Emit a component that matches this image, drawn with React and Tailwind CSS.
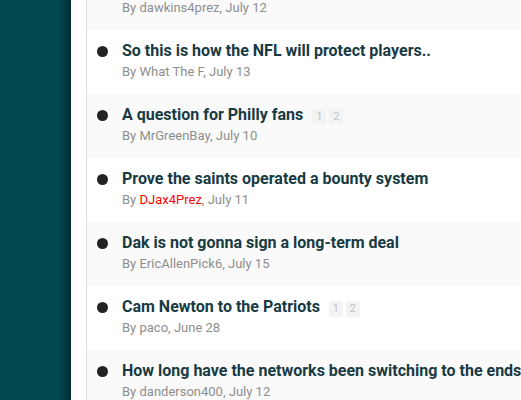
import React from "react";

const rows = [
  { title: "Some earlier topic", by: "dawkins4prez", date: "July 12", bg: "bg-[#fafafa]" },
  { title: "So this is how the NFL will protect players..", by: "What The F", date: "July 13", bg: "bg-white" },
  { title: "A question for Philly fans", by: "MrGreenBay", date: "July 10", bg: "bg-[#fafafa]", pages: true },
  { title: "Prove the saints operated a bounty system", by: "DJax4Prez", date: "July 11", bg: "bg-white", red: true },
  { title: "Dak is not gonna sign a long-term deal", by: "EricAllenPick6", date: "July 15", bg: "bg-[#fafafa]" },
  { title: "Cam Newton to the Patriots", by: "paco", date: "June 28", bg: "bg-white", pages: true },
  { title: "How long have the networks been switching to the ends of games", by: "danderson400", date: "July 12", bg: "bg-[#fafafa]" },
];

export default function App() {
  return (
    <div
      className="flex h-[400px] w-[521px] overflow-hidden bg-white"
      style={{ fontFamily: "Roboto, 'Noto Sans', sans-serif" }}
    >
      <div className="relative w-[71px] shrink-0 bg-[#00474f]">
        <div className="absolute right-0 top-0 h-full w-[12px] bg-gradient-to-r from-transparent to-[rgba(0,0,0,0.35)]" />
      </div>
      <div className="w-[15px] shrink-0 bg-white" />
      <div className="flex-1 min-w-0 border-l border-[#dcdcdc]">
        <div className="-mt-[34px] flex flex-col">
          {rows.map((r, i) => (
            <div key={i} className={`${r.bg} flex h-[64px] items-start pl-[10px] pt-[11px]`}>
              <div className="flex h-[20px] w-[11px] shrink-0 items-center">
                <div className="h-[11px] w-[11px] rounded-full bg-[#222222]" />
              </div>
              <div className="ml-[14px] min-w-0 flex-1">
                <div className="flex h-[20px] items-center whitespace-nowrap">
                  <span className="text-[16px] font-bold leading-[20px] text-[#173a43]">{r.title}</span>
                  {r.pages && (
                    <span className="ml-[9px] mt-[4px] flex gap-[3px]">
                      <span className="flex h-[16px] w-[14px] items-center justify-center rounded-[2px] bg-[#f3f3f3] text-[11px] text-[#c2c2c2]">1</span>
                      <span className="flex h-[16px] w-[14px] items-center justify-center rounded-[2px] bg-[#f3f3f3] text-[11px] text-[#c2c2c2]">2</span>
                    </span>
                  )}
                </div>
                <div className="mt-[2px] whitespace-nowrap text-[13px] leading-[18px] text-[#8e8e8e]">
                  By <span className={r.red ? "text-[#ff0000]" : ""}>{r.by}</span>, {r.date}
                </div>
              </div>
            </div>
          ))}
        </div>
      </div>
    </div>
  );
}
